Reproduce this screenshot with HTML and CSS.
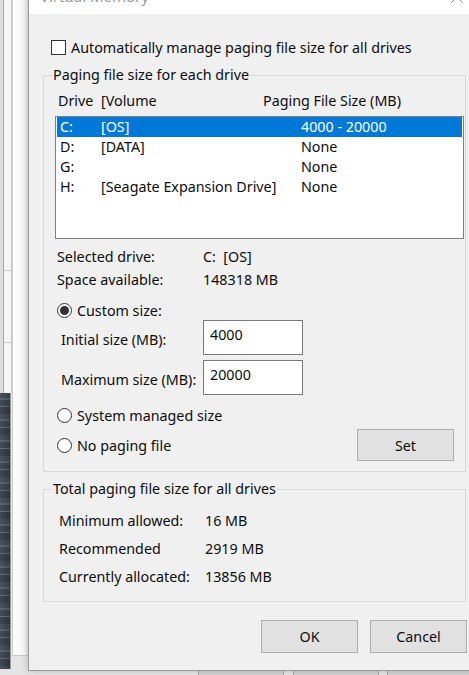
FILE: index.html
```html
<!doctype html>
<html lang="en">
    <head>
        <meta charset="UTF-8" />
        <meta name="viewport" content="width=device-width, initial-scale=1.0" />
        <title>Virtual Memory</title>
        <link rel="stylesheet" href="styles.css">
    </head>
    <body>
        <div class="desktop">
            <!-- windows behind the dialog -->
            <div class="back-edge"></div>
            <div class="back-side">
                <span class="back-letter">s</span>
                <div class="back-rule back-rule-a"></div>
                <div class="back-rule back-rule-b"></div>
            </div>
            <div class="back-photo"></div>
            <div class="back-pane"></div>
            <div class="back-strip">
                <div class="back-button back-button-a"></div>
                <div class="back-button back-button-b"></div>
                <div class="back-button back-button-c"></div>
            </div>

            <div class="dialog">
                <div class="titlebar">
                    <span class="title">Virtual Memory</span>
                    <svg class="close" width="12" height="12" viewBox="0 0 12 12">
                        <path d="M0.5 0.5L11.5 11.5M11.5 0.5L0.5 11.5" />
                    </svg>
                </div>

                <div class="dialog-body">
                    <div class="check-row">
                        <span class="checkbox"></span>
                        <span>Automatically manage paging file size for all drives</span>
                    </div>

                    <fieldset class="group group-drives">
                        <legend>Paging file size for each drive</legend>

                        <div class="list-head">
                            <span class="head-drive">Drive</span>
                            <span class="head-volume">[Volume</span>
                            <span>Paging File Size (MB)</span>
                        </div>

                        <div class="drive-list">
                            <div class="drive-row selected">
                                <span class="col-drive">C:</span>
                                <span class="col-volume">[OS]</span>
                                <span>4000 - 20000</span>
                            </div>
                            <div class="drive-row">
                                <span class="col-drive">D:</span>
                                <span class="col-volume">[DATA]</span>
                                <span>None</span>
                            </div>
                            <div class="drive-row">
                                <span class="col-drive">G:</span>
                                <span class="col-volume"></span>
                                <span>None</span>
                            </div>
                            <div class="drive-row">
                                <span class="col-drive">H:</span>
                                <span class="col-volume">[Seagate Expansion Drive]</span>
                                <span>None</span>
                            </div>
                        </div>

                        <div class="info">
                            <div class="info-row">
                                <span class="info-label">Selected drive:</span>
                                <span>C:&nbsp;&nbsp;[OS]</span>
                            </div>
                            <div class="info-row">
                                <span class="info-label">Space available:</span>
                                <span>148318 MB</span>
                            </div>
                        </div>

                        <div class="radio-row radio-custom">
                            <span class="radio checked"></span>
                            <span>Custom size:</span>
                        </div>

                        <div class="size-row">
                            <span class="size-label">Initial size (MB):</span>
                            <input class="size-input" type="text" value="4000">
                        </div>
                        <div class="size-row size-row-max">
                            <span class="size-label">Maximum size (MB):</span>
                            <input class="size-input" type="text" value="20000">
                        </div>

                        <div class="radio-row radio-system">
                            <span class="radio"></span>
                            <span>System managed size</span>
                        </div>

                        <div class="set-row">
                            <div class="radio-row">
                                <span class="radio"></span>
                                <span>No paging file</span>
                            </div>
                            <button class="btn btn-set">Set</button>
                        </div>
                    </fieldset>

                    <fieldset class="group group-total">
                        <legend>Total paging file size for all drives</legend>
                        <div class="total-rows">
                            <div class="total-row">
                                <span class="total-label">Minimum allowed:</span>
                                <span>16 MB</span>
                            </div>
                            <div class="total-row">
                                <span class="total-label">Recommended</span>
                                <span>2919 MB</span>
                            </div>
                            <div class="total-row">
                                <span class="total-label">Currently allocated:</span>
                                <span>13856 MB</span>
                            </div>
                        </div>
                    </fieldset>

                    <div class="actions">
                        <button class="btn">OK</button>
                        <button class="btn">Cancel</button>
                    </div>
                </div>
            </div>
        </div>
    </body>
</html>
```

FILE: styles.css
```css
* {
    margin: 0;
    padding: 0;
    box-sizing: border-box;
}

body {
    width: 469px;
    height: 675px;
    overflow: hidden;
    background: #e4e4e4;
    font-family: "Noto Sans", "Open Sans", sans-serif;
    font-size: 14.3px;
    color: #0d0d0d;
}

.desktop {
    position: relative;
    width: 469px;
    height: 675px;
    overflow: hidden;
}

/* background windows */
.back-edge {
    position: absolute;
    left: 0;
    top: 0;
    width: 4px;
    height: 393px;
    background: #dedede;
    border-right: 1px solid #a3a3a3;
}

.back-side {
    position: absolute;
    left: 4px;
    top: 0;
    width: 8px;
    height: 393px;
    background: #f6f6f6;
    border-right: 1px solid #c4c4c4;
    overflow: hidden;
}

.back-letter {
    position: absolute;
    left: -8px;
    top: 160px;
    font-size: 15px;
    color: #333;
}

.back-rule {
    position: absolute;
    left: -4px;
    width: 12px;
    height: 1px;
    background: #c8c8c8;
}

.back-rule-a {
    top: 270px;
}

.back-rule-b {
    top: 342px;
}

.back-photo {
    position: absolute;
    left: 0;
    top: 393px;
    width: 11px;
    height: 276px;
    background:
        linear-gradient(90deg, rgba(255, 255, 255, 0.08), rgba(0, 0, 0, 0.1)),
        repeating-linear-gradient(
            180deg,
            #3a4550 0 5px,
            #4f5a65 5px 7px,
            #343f4a 7px 13px,
            #5a6570 13px 14px,
            #2f3944 14px 21px
        );
    border-right: 1px solid #9a9a9a;
}

.back-pane {
    position: absolute;
    left: 12px;
    top: 0;
    width: 17px;
    height: 656px;
    background: linear-gradient(90deg, #fdfdfd 0%, #f6f6f6 70%, #e2e2e2 100%);
    border-bottom: 1px solid #c9c9c9;
    border-left: 1px solid #d0d0d0;
}

.back-strip {
    position: absolute;
    left: 29px;
    top: 671px;
    width: 440px;
    height: 4px;
    background: #e8e8e8;
}

.back-button {
    position: absolute;
    top: 0;
    height: 4px;
    background: #d6d6d6;
    border-left: 1px solid #a8a8a8;
    border-right: 1px solid #a8a8a8;
}

.back-button-a {
    left: 169px;
    width: 86px;
}

.back-button-b {
    left: 264px;
    width: 86px;
}

.back-button-c {
    left: 358px;
    width: 90px;
}

/* dialog */
.dialog {
    position: absolute;
    left: 28px;
    top: -24px;
    width: 452px;
    height: 695px;
    background: #f0f0f0;
    border: 1px solid #9a9a9a;
    box-shadow: 0 0 7px rgba(0, 0, 0, 0.22);
}

.titlebar {
    height: 37px;
    background: #fff;
    display: flex;
    align-items: flex-start;
    justify-content: space-between;
    padding: 9px 0 0 11px;
}

.title {
    font-size: 15px;
    line-height: 20px;
    color: #9c9c9c;
}

.close {
    margin: 5px 16px 0 0;
    fill: none;
    stroke: #8a8a8a;
    stroke-width: 1;
}

.dialog-body {
    padding: 0 12px 0 14px;
}

.check-row {
    display: flex;
    align-items: center;
    gap: 5px;
    height: 20px;
    margin-top: 23px;
    padding-left: 8px;
}

.checkbox {
    width: 15px;
    height: 15px;
    background: #fff;
    border: 1px solid #333;
}

.group {
    border: 1px solid #d9d9d9;
    margin-right: 1px;
    min-width: 0;
}

.group legend {
    margin-left: 8px;
    padding: 0 1px;
    line-height: 20px;
}

.group-drives {
    margin-top: 8px;
    padding-bottom: 10px;
}

.list-head {
    display: flex;
    height: 20px;
    line-height: 20px;
    margin-top: 6px;
    padding-left: 14px;
}

.head-drive {
    width: 43px;
}

.head-volume {
    width: 162px;
}

.drive-list {
    width: 409px;
    height: 123px;
    margin: 5px 0 0 11px;
    padding: 0 1px;
    background: #fff;
    border: 1px solid #7f7f7f;
}

.drive-row {
    display: flex;
    height: 20px;
    line-height: 20px;
    padding-left: 3px;
}

.drive-row.selected {
    background: #0078d7;
    color: #fff;
}

.col-drive {
    width: 41px;
}

.col-volume {
    width: 200px;
}

.info {
    margin-top: 6px;
    padding-left: 13px;
}

.info-row {
    display: flex;
    align-items: center;
    height: 23px;
}

.info-label {
    width: 146px;
}

.radio-row {
    display: flex;
    align-items: center;
    gap: 5px;
    height: 20px;
    padding-left: 13px;
}

.radio-custom {
    height: 19px;
    margin-top: 10px;
}

.radio {
    width: 15px;
    height: 15px;
    border-radius: 50%;
    background: #fff;
    border: 1px solid #333;
    display: flex;
    align-items: center;
    justify-content: center;
}

.radio.checked::after {
    content: "";
    width: 9px;
    height: 9px;
    border-radius: 50%;
    background: #333;
}

.size-row {
    display: flex;
    align-items: center;
    height: 35px;
    padding-left: 17px;
}

.size-row-max {
    margin-top: 5px;
}

.size-label {
    width: 142px;
    padding-top: 4px;
}

.size-input {
    width: 100px;
    height: 35px;
    padding: 3px 6px 10px;
    border: 1px solid #7a7a7a;
    background: #fff;
    font: inherit;
    line-height: 20px;
    color: #0d0d0d;
}

.radio-system {
    margin-top: 10px;
}

.set-row {
    display: flex;
    align-items: center;
    justify-content: space-between;
    height: 32px;
    margin-top: 4px;
}

.set-row .radio-row {
    padding-left: 13px;
}

.btn {
    width: 97px;
    height: 33px;
    background: #e1e1e1;
    border: 1px solid #adadad;
    font: inherit;
    color: #0d0d0d;
}

.btn-set {
    height: 32px;
    margin-right: 11px;
}

.group-total {
    margin-top: 7px;
    padding-bottom: 11px;
}

.total-rows {
    margin-top: 7px;
    padding-left: 15px;
}

.total-row {
    display: flex;
    align-items: center;
    height: 28px;
}

.total-label {
    width: 146px;
}

.actions {
    display: flex;
    justify-content: flex-end;
    gap: 12px;
    margin-top: 18px;
}
```
